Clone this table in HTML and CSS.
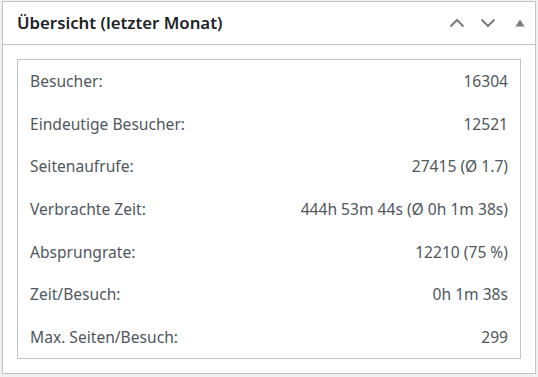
FILE: index.html
```html
<!DOCTYPE html>
<html lang="de">
<head>
    <meta charset="UTF-8">
    <title>Übersicht</title>
    <link rel="stylesheet" href="styles.css">
</head>
<body>
    <div class="postbox">
        <div class="postbox-header">
            <h2 class="hndle">Übersicht (letzter Monat)</h2>
            <div class="handle-actions">
                <button class="handle-btn move-up" aria-label="Nach oben">
                    <svg width="16" height="10" viewBox="0 0 16 10"><polyline points="1.5,8.5 8,2 14.5,8.5" /></svg>
                </button>
                <button class="handle-btn move-down" aria-label="Nach unten">
                    <svg width="16" height="10" viewBox="0 0 16 10"><polyline points="1.5,1.5 8,8 14.5,1.5" /></svg>
                </button>
                <button class="handle-btn toggle" aria-label="Zuklappen">
                    <svg width="10" height="8" viewBox="0 0 10 8"><polygon points="5,0.5 9.5,7.5 0.5,7.5" /></svg>
                </button>
            </div>
        </div>
        <div class="inside">
            <div class="stats">
                <div class="stat-row"><span>Besucher:</span><span>16304</span></div>
                <div class="stat-row"><span>Eindeutige Besucher:</span><span>12521</span></div>
                <div class="stat-row"><span>Seitenaufrufe:</span><span>27415 (Ø 1.7)</span></div>
                <div class="stat-row"><span>Verbrachte Zeit:</span><span>444h 53m 44s (Ø 0h 1m 38s)</span></div>
                <div class="stat-row"><span>Absprungrate:</span><span>12210 (75 %)</span></div>
                <div class="stat-row"><span>Zeit/Besuch:</span><span>0h 1m 38s</span></div>
                <div class="stat-row"><span>Max. Seiten/Besuch:</span><span>299</span></div>
            </div>
        </div>
    </div>
</body>
</html>
```

FILE: styles.css
```css
html, body {
    margin: 0;
    padding: 0;
}

body {
    background-color: #f0f0f1;
    font-family: "Noto Sans", "Open Sans", sans-serif;
    font-size: 15.6px;
    color: #50575e;
    padding: 1px 0 0 2px;
}

/* Dashboard widget box */
.postbox {
    width: 532px;
    background-color: #fff;
    border: 1px solid #c3c4c7;
}

.postbox-header {
    display: flex;
    align-items: center;
    justify-content: space-between;
    height: 42px;
    border-bottom: 1px solid #c3c4c7;
    padding: 0 10px 0 14px;
}

.hndle {
    margin: 0;
    font-size: 16.8px;
    font-weight: 600;
    color: #1d2327;
    line-height: 1.4;
}

.handle-actions {
    display: flex;
    align-items: center;
}

.handle-btn {
    background: none;
    border: none;
    padding: 0;
    margin-left: 15px;
    display: flex;
    align-items: center;
    justify-content: center;
    cursor: pointer;
}

.handle-btn svg polyline {
    fill: none;
    stroke: #787c82;
    stroke-width: 2;
}

.handle-btn svg polygon {
    fill: #787c82;
}

.handle-btn.toggle {
    margin-left: 19px;
}

.inside {
    padding: 14px;
}

/* Stats table */
.stats {
    border: 1px solid #c3c4c7;
    height: 298px;
    display: grid;
    grid-template-rows: repeat(7, 1fr);
    padding: 0 12px;
}

.stat-row {
    display: flex;
    align-items: center;
    justify-content: space-between;
    line-height: 20px;
}
```
